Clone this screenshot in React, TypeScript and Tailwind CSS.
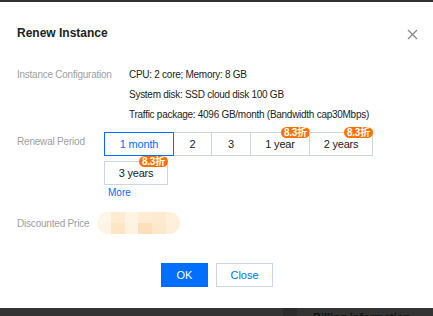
import React from "react";

const font = { fontFamily: '"Liberation Sans", "Noto Sans CJK SC", sans-serif' };

function Badge() {
  return (
    <span className="absolute -top-[6px] right-[-1px] h-[11px] px-[3px] rounded-[6px] bg-[#ff7200] text-white text-[10px] leading-[11px] font-bold flex items-center" style={font}>
      8.3折
    </span>
  );
}

function Opt({ label, w, active, badge, cls }: { label: string; w: string; active?: boolean; badge?: boolean; cls?: string }) {
  return (
    <div
      className={`relative h-[24px] flex items-center justify-center text-[11px] tracking-[-0.2px] ${w} ${cls ?? ""} ${
        active ? "border border-[#006eff] text-[#006eff] z-10" : "border border-[#cfd5de] text-[#222]"
      }`}
    >
      {label}
      {badge && <Badge />}
    </div>
  );
}

export default function App() {
  const blur = [
    ["#fff6ea", "#fdebd2", "#fff3e4", "#feecd5", "#feead0", "#fff0dc"],
    ["#fff3e3", "#fde6c6", "#fff2e1", "#fde0b9", "#fee8cc", "#ffefda"],
  ];
  return (
    <div className="w-[433px] h-[316px] bg-[#2f2f2f] flex flex-col overflow-hidden" style={font}>
      <div className="h-[2px] shrink-0 bg-[#333]" />
      <div className="h-[306px] shrink-0 bg-white relative flex flex-col">
        <div className="flex items-center justify-between pl-[17px] pr-[15px] pt-[22px]">
          <span className="text-[12px] font-bold text-[#222]">Renew Instance</span>
          <svg width="11" height="11" viewBox="0 0 11 11" className="mt-[2px]">
            <path d="M1 1L10 10M10 1L1 10" stroke="#888" strokeWidth="1.3" />
          </svg>
        </div>
        <div className="flex pl-[17px] pt-[23px]">
          <div className="w-[112px] text-[10px] tracking-[-0.25px] text-[#a0a0a0] leading-[20px]">Instance Configuration</div>
          <div className="text-[10px] tracking-[-0.27px] text-[#222] leading-[20px]">
            <div>CPU: 2 core; Memory: 8 GB</div>
            <div>System disk: SSD cloud disk 100 GB</div>
            <div>Traffic package: 4096 GB/month (Bandwidth cap30Mbps)</div>
          </div>
        </div>
        <div className="flex pl-[17px] pt-[7px]">
          <div className="w-[87px] text-[10px] tracking-[-0.2px] text-[#a0a0a0] pt-[2px]">Renewal Period</div>
          <div className="flex flex-col">
            <div className="flex">
              <Opt label="1 month" w="w-[70px]" active />
              <Opt label="2" w="w-[39px]" cls="-ml-px" />
              <Opt label="3" w="w-[40px]" cls="-ml-px" />
              <Opt label="1 year" w="w-[60px]" cls="-ml-px" badge />
              <Opt label="2 years" w="w-[64px]" cls="-ml-px" badge />
            </div>
            <div className="flex mt-[5px]">
              <Opt label="3 years" w="w-[64px]" badge />
            </div>
            <div className="text-[10px] text-[#006eff] pl-[4px] pt-[0px]">More</div>
          </div>
        </div>
        <div className="flex items-center pl-[17px] pt-[12px]">
          <div className="w-[80px] text-[10px] tracking-[-0.2px] text-[#a0a0a0]">Discounted Price</div>
          <div className="flex flex-col rounded-full overflow-hidden w-[83px] h-[22px]">
            {blur.map((row, i) => (
              <div key={i} className="flex flex-1">
                {row.map((c, j) => (
                  <div key={j} className="flex-1" style={{ background: c }} />
                ))}
              </div>
            ))}
          </div>
        </div>
        <div className="flex justify-center gap-[8px] pt-[29px] pl-[1px]">
          <button className="w-[47px] h-[24px] bg-[#006eff] text-white text-[11px]">OK</button>
          <button className="w-[57px] h-[24px] border border-[#cfd5de] text-[#006eff] text-[11px] bg-white">Close</button>
        </div>
      </div>
      <div className="flex-1 min-h-0 bg-[#333] flex overflow-hidden">
        <div className="w-[283px]" />
        <div className="w-[14px] bg-[#2b2b2b]" />
        <div className="text-[11px] font-bold text-[#111] pl-[16px] leading-[16px] pt-[1px]">Billing information</div>
      </div>
    </div>
  );
}
